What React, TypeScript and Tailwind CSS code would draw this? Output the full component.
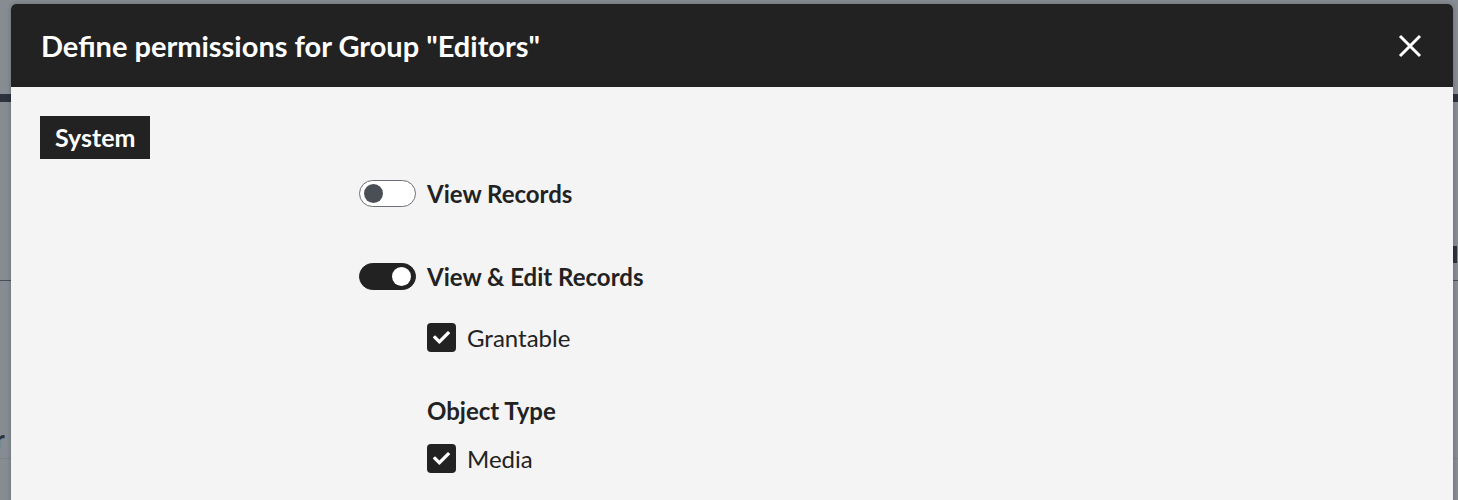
import React from 'react';
import { FaCheck } from 'react-icons/fa';

const font = { fontFamily: 'Lato, "Noto Sans", sans-serif' };

function Toggle({ on }: { on: boolean }) {
  return (
    <div
      className={`flex h-[27px] w-[57px] items-center rounded-full border px-[4px] ${
        on ? 'justify-end border-[#222222] bg-[#222222]' : 'justify-start border-[#6b6f75] bg-white'
      }`}
    >
      <div className={`h-[19px] w-[19px] rounded-full ${on ? 'bg-white' : 'bg-[#4a4e55]'}`} />
    </div>
  );
}

function Checkbox({ label }: { label: string }) {
  return (
    <div className="flex items-center gap-[11px]">
      <div className="flex h-[29px] w-[29px] items-center justify-center rounded-[4px] bg-[#222222]">
        <FaCheck className="text-white" size={17} />
      </div>
      <span className="text-[24px] leading-none text-[#222222]">{label}</span>
    </div>
  );
}

export default function App() {
  return (
    <div className="relative h-[500px] w-[1458px] overflow-hidden bg-[#878c93]" style={font}>
      {/* page content dimmed behind the overlay */}
      <div className="absolute left-0 top-[94px] h-[8px] w-full bg-[#2d333c]" />
      <div className="absolute left-0 top-[280px] h-px w-full bg-[#4b5058]" />
      <div className="absolute left-0 top-[458px] h-px w-full bg-[#7d8289]" />
      <div className="absolute left-[1453px] top-[246px] h-[17px] w-[4px] bg-[#2d333c]" />
      <div className="absolute left-[-5px] top-[426px] text-[26px] font-bold leading-none text-[#2d333c]">r</div>

      {/* modal */}
      <div className="absolute left-[11px] top-[4px] h-[600px] w-[1442px] overflow-hidden rounded-t-[5px] bg-[#f4f4f4] shadow-[0_0_4px_rgba(0,0,0,0.25)]">
        <div className="flex h-[83px] items-center justify-between bg-[#222222] pl-[30px] pr-[31px]">
          <h1 className="text-[29px] font-bold leading-none text-white">Define permissions for Group "Editors"</h1>
          <svg width="24" height="24" viewBox="0 0 24 24" className="text-white">
            <path d="M2 2 L22 22 M22 2 L2 22" stroke="currentColor" strokeWidth="3" />
          </svg>
        </div>

        <div className="px-[29px] pt-[29px]">
          <div className="inline-flex h-[43px] items-center bg-[#222222] px-[15px] text-[25px] font-bold leading-none text-white">
            System
          </div>

          <div className="ml-[319px] mt-[21px] flex flex-col text-[#222222]">
            <div className="flex items-center gap-[11px]">
              <Toggle on={false} />
              <span className="text-[24px] font-bold leading-none">View Records</span>
            </div>

            <div className="mt-[56px] flex items-center gap-[11px]">
              <Toggle on />
              <span className="text-[24px] font-bold leading-none">View &amp; Edit Records</span>
            </div>

            <div className="ml-[68px] mt-[33px] flex flex-col">
              <Checkbox label="Grantable" />
              <div className="mt-[47px] text-[24px] font-bold leading-none">Object Type</div>
              <div className="mt-[21px]">
                <Checkbox label="Media" />
              </div>
            </div>
          </div>
        </div>
      </div>
    </div>
  );
}
